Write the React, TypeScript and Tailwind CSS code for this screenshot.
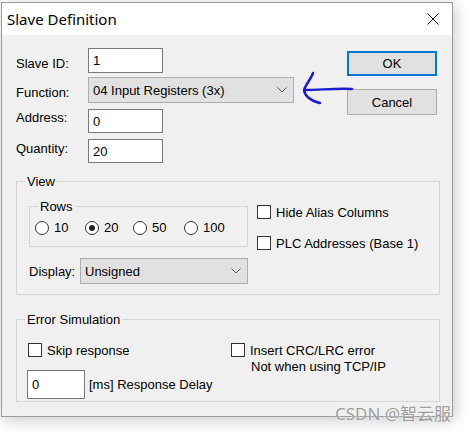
import React from "react";

const font = "font-['Liberation_Sans',Arial,sans-serif] text-[13px] leading-[15px] text-black";

function TextBox({ value, className = "" }: { value: string; className?: string }) {
  return (
    <div className={`flex items-center border border-[#7a7a7a] bg-white pl-[4px] ${className}`}>
      {value}
    </div>
  );
}

function Combo({ value, className = "" }: { value: string; className?: string }) {
  return (
    <div className={`flex items-center justify-between border border-[#adadad] bg-[#e1e1e1] pl-[4px] pr-[6px] ${className}`}>
      <span>{value}</span>
      <svg viewBox="0 0 10 6" className="h-[6px] w-[10px]" aria-hidden="true">
        <path d="M0.5 0.5 5 5 9.5 0.5" fill="none" stroke="#555" strokeWidth={1} />
      </svg>
    </div>
  );
}

function Check({ label, className = "" }: { label: React.ReactNode; className?: string }) {
  return (
    <div className={`flex items-start gap-[5px] ${className}`}>
      <span className="h-[14px] w-[14px] shrink-0 border border-[#333] bg-white" />
      <span>{label}</span>
    </div>
  );
}

function Radio({ label, checked, className = "" }: { label: string; checked?: boolean; className?: string }) {
  return (
    <div className={`flex items-center gap-[5px] ${className}`}>
      <span className="flex h-[14px] w-[14px] items-center justify-center rounded-full border border-[#333] bg-white">
        {checked ? <span className="h-[6px] w-[6px] rounded-full bg-[#222]" /> : null}
      </span>
      <span>{label}</span>
    </div>
  );
}

function Field({ label, pad, children }: { label: string; pad: string; children: React.ReactNode }) {
  return (
    <div className="flex items-start">
      <span className={`w-[72px] ${pad}`}>{label}</span>
      {children}
    </div>
  );
}

export default function App() {
  return (
    <div className={`relative h-[433px] w-[469px] overflow-hidden bg-white pt-[2px] pl-[1px] ${font}`}>
      {/* dialog window */}
      <div className="flex h-[415px] w-[452px] flex-col border border-[#9b9b9b] shadow-[2px_3px_14px_rgba(0,0,0,0.22)]">
        <div className="flex h-[32px] items-center justify-between bg-white pl-[5px] pr-[13px]">
          <span className="font-['Noto_Sans',sans-serif] text-[15px] leading-[20px]">Slave Definition</span>
          <svg viewBox="0 0 12 12" className="h-[12px] w-[12px]" aria-hidden="true">
            <path d="M0.5 0.5 11.5 11.5M11.5 0.5 0.5 11.5" stroke="#111" strokeWidth={1} />
          </svg>
        </div>

        <div className="flex-1 bg-[#f0f0f0] pt-[13px] pl-[14px] pr-[12px]">
          {/* top fields + buttons */}
          <div className="flex">
            <div className="flex flex-col">
              <Field label="Slave ID:" pad="pt-[8px]">
                <TextBox value="1" className="h-[25px] w-[75px]" />
              </Field>
              <div className="mt-[4px]">
                <Field label="Function:" pad="pt-[8px]">
                  <Combo value="04 Input Registers (3x)" className="h-[26px] w-[206px]" />
                </Field>
              </div>
              <div className="mt-[6px]">
                <Field label="Address:" pad="pt-[1px]">
                  <TextBox value="0" className="h-[24px] w-[75px]" />
                </Field>
              </div>
              <div className="mt-[6px]">
                <Field label="Quantity:" pad="pt-[2px]">
                  <TextBox value="20" className="h-[24px] w-[75px]" />
                </Field>
              </div>
            </div>
            <div className="ml-auto mr-[3px] flex flex-col pt-[3px]">
              <button className="h-[25px] w-[90px] border-2 border-[#0078d7] bg-[#e1e1e1]">OK</button>
              <button className="mt-[13px] h-[26px] w-[90px] border border-[#adadad] bg-[#e1e1e1]">Cancel</button>
            </div>
          </div>

          {/* View group */}
          <fieldset className="mt-[11px] border border-[#d5d5d5] pl-[12px] pt-[10px] pb-[10px]">
            <legend className="-ml-[4px] px-[2px]">View</legend>
            <div className="flex">
              <div className="flex flex-col">
                <fieldset className="w-[219px] border border-[#d5d5d5] pl-[5px] pt-[6px] pb-[11px]">
                  <legend className="ml-[3px] px-[2px]">Rows</legend>
                  <div className="flex">
                    <Radio label="10" className="w-[50px]" />
                    <Radio label="20" checked className="w-[48px]" />
                    <Radio label="50" className="w-[51px]" />
                    <Radio label="100" />
                  </div>
                </fieldset>
                <div className="mt-[11px] flex items-center">
                  <span className="w-[51px]">Display:</span>
                  <Combo value="Unsigned" className="h-[26px] w-[168px]" />
                </div>
              </div>
              <div className="ml-[9px] flex flex-col pt-[6px]">
                <Check label="Hide Alias Columns" />
                <Check label="PLC Addresses (Base 1)" className="mt-[16px]" />
              </div>
            </div>
          </fieldset>

          {/* Error Simulation group */}
          <fieldset className="mt-[17px] border border-[#d5d5d5] pl-[10px] pt-[16px] pb-[2px]">
            <legend className="-ml-[2px] px-[2px]">Error Simulation</legend>
            <div className="flex">
              <div className="flex w-[204px] flex-col">
                <Check label="Skip response" className="ml-[1px]" />
                <div className="mt-[12px] flex items-center gap-[4px]">
                  <TextBox value="0" className="h-[29px] w-[58px]" />
                  <span>[ms] Response Delay</span>
                </div>
              </div>
              <Check
                label={
                  <span className="block leading-[16px]">
                    Insert CRC/LRC error
                    <br />
                    <span className="pl-[1px]">Not when using TCP/IP</span>
                  </span>
                }
              />
            </div>
          </fieldset>
        </div>
      </div>

      {/* hand-drawn annotation arrow */}
      <svg viewBox="0 0 56 36" className="absolute left-[300px] top-[70px] h-[36px] w-[56px]" aria-hidden="true">
        <path
          d="M13 3C11 9 6 14 4 20C5 27 12 31 20 33M5 20C20 20 38 18 52 19"
          fill="none"
          stroke="#1a1ad0"
          strokeWidth={2.4}
          strokeLinecap="round"
          strokeLinejoin="round"
        />
      </svg>

      {/* watermark */}
      <span className="absolute left-[335px] top-[403px] font-['Noto_Sans','Noto_Sans_CJK_SC',sans-serif] text-[17px] leading-[22px] text-[#9d9d9d] [text-shadow:0_0_2px_#fff]">
        CSDN @智云服
      </span>
    </div>
  );
}
